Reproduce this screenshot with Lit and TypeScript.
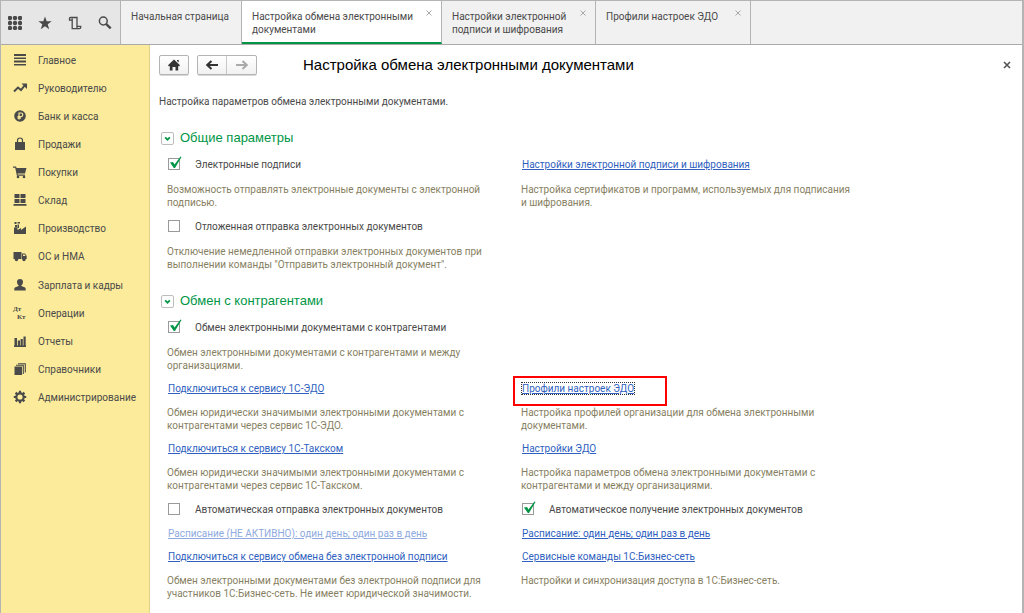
import { LitElement, html, css, svg, nothing, TemplateResult } from "lit";
import { customElement, state } from "lit/decorators.js";
import { classMap } from "lit/directives/class-map.js";

const glyphs: Record<string, TemplateResult> = {
  menu: svg`<path d="M1 1h12v2H1zM1 4.500h12v1.500H1zM1 7.500h12v2H1zM1 11h12v1.500H1z"/>`,
  trend: svg`<path d="M1 10.500L5 6.500L8 9L12 4" fill="none" stroke="currentColor" stroke-width="2"/><path d="M8.500 2.500H14V8z"/>`,
  ruble: svg`<circle cx="7" cy="7" r="5.800"/><path d="M6 10.500V4h2a1.700 1.700 0 0 1 0 3.600H4.500M4.500 9.200H8" fill="none" stroke="#fbeb9a" stroke-width="1.200"/>`,
  bag: svg`<path d="M2 5h10v8H2z"/><path d="M4.500 6.500V3.500a2.500 2.500 0 0 1 5 0v3" fill="none" stroke="currentColor" stroke-width="1.200"/>`,
  cart: svg`<path d="M0 1.500h3l.6 1.500H13.500L12 8.500H4.600l.3 1H12v1.200H3.900L2.200 2.700H0z"/><circle cx="5" cy="12" r="1.300"/><circle cx="11" cy="12" r="1.300"/>`,
  stock: svg`<path d="M1.500 1h5v4h-5zM7.500 1h5v4h-5zM1.500 6h5v4h-5zM7.500 6h5v4h-5zM.5 11h13v1.800H.5z"/>`,
  factory: svg`<path d="M1 13V6.500h3.500V9L8 7v2l5-3.500V13z"/><path d="M1.500 1h2v2h-2zM4.500 1h2.500v1.500H4.500zM2 4h2v2.500H2zM4.500 3.500H6V7H4.500z"/>`,
  truck: svg`<path d="M.5 3h8v7h-8zM9 4.500h3L13.700 7v3H9z"/><path d="M10 5.500h1.600l1 1.500H10z" fill="#fbeb9a"/><circle cx="3.500" cy="10.500" r="1.700"/><circle cx="11" cy="10.500" r="1.700"/>`,
  person: svg`<path d="M7 1a3 3 0 0 1 3 3c0 1.500-.7 2.600-1.600 3.200V8l3.100 1.200c.9.400 1.200.9 1.200 1.800v1.500H1.300V11c0-.9.300-1.400 1.200-1.800L5.600 8v-.8C4.700 6.600 4 5.500 4 4a3 3 0 0 1 3-3z"/>`,
  chart: svg`<path d="M1 11.500h12v1.500H1zM1.500 4h2.500v7.500H1.500zM4.800 6.500h2.200v5H4.800zM7.600 5h2.200v6.500H7.600zM10.500 2.500h2.200v9h-2.200z"/>`,
  books: svg`<path d="M1.500 4.500h7.500V13H1.500z"/><path d="M3 3.300h7.300V12M5 1.700h7.300V10.500" fill="none" stroke="currentColor" stroke-width="1.100"/>`,
  gear: svg`<circle cx="7" cy="7" r="3.700" fill="none" stroke="currentColor" stroke-width="2.200"/><path d="M7 .8V3M7 11v2.200M.8 7H3M11 7h2.200M2.600 2.600l1.500 1.500M9.900 9.900l1.500 1.500M11.400 2.600L9.900 4.100M4.100 9.900l-1.500 1.500" stroke="currentColor" stroke-width="2.200"/>`,
  apps: svg`${[2, 7, 12].map((y) => [2, 7, 12].map((x) => svg`<circle cx=${x} cy=${y} r="2.200"/>`))}`,
  star: svg`<path d="M7 .5l1.700 4.700h5L9.700 8.200l1.500 5L7 10.200l-4.200 3 1.500-5L.3 5.200h5z"/>`,
  scroll: svg`<path d="M3.700 4.200H1.500V2.300Q1.500 1.500 2.500 1.500H9V10.300H12.700V11.500Q12.700 12.600 11.500 12.600H4.200V2.500M9 10.500V12.300" fill="none" stroke="currentColor" stroke-width="1.300"/>`,
  search: svg`<circle cx="5.300" cy="5" r="3.900" fill="none" stroke="currentColor" stroke-width="1.500"/><path d="M8 7.800L12.700 12.300" stroke="currentColor" stroke-width="2.400"/>`,
  home: svg`<path d="M7 1.500L13 7.300l-1 1.200-.8-.7V12.500H8.500V9h-3v3.500H2.800V7.800L2 8.500 1 7.300zM10 2h1.700v2.500L10 3z"/>`,
  back: svg`<path d="M2 7h11M6.500 3L2.200 7l4.300 4" fill="none" stroke="currentColor" stroke-width="2"/>`,
  forward: svg`<path d="M1 7h11M7.500 3l4.300 4-4.300 4" fill="none" stroke="currentColor" stroke-width="2"/>`,
  cross: svg`<path d="M4 4l6 6M10 4l-6 6" stroke="currentColor" stroke-width="1.600"/>`,
  thin: svg`<path d="M4.500 4.500l5 5M9.500 4.500l-5 5" stroke="currentColor" stroke-width="1"/>`,
  down: svg`<path d="M4 5.500L7 8.500l3-3" fill="none" stroke="currentColor" stroke-width="2.200"/>`,
};

const icon = (name: string) =>
  html`<svg class="icon" viewBox="0 0 14 14" fill="currentColor" aria-hidden="true">${glyphs[name]}</svg>`;

const sections: [string, string][] = [
  ["menu", "Главное"],
  ["trend", "Руководителю"],
  ["ruble", "Банк и касса"],
  ["bag", "Продажи"],
  ["cart", "Покупки"],
  ["stock", "Склад"],
  ["factory", "Производство"],
  ["truck", "ОС и НМА"],
  ["person", "Зарплата и кадры"],
  ["", "Операции"],
  ["chart", "Отчеты"],
  ["books", "Справочники"],
  ["gear", "Администрирование"],
];

interface Cell {
  kind: "check" | "note" | "link";
  text: string;
  id?: string;
  muted?: boolean;
  marked?: boolean;
}
type Row = [Cell | null, Cell | null];

const check = (id: string, text: string): Cell => ({ kind: "check", id, text });
const note = (text: string): Cell => ({ kind: "note", text });
const link = (text: string, extra: Partial<Cell> = {}): Cell => ({ kind: "link", text, ...extra });

const general: Row[] = [
  [check("sign", "Электронные подписи"), link("Настройки электронной подписи и шифрования")],
  [
    note("Возможность отправлять электронные документы с электронной подписью."),
    note("Настройка сертификатов и программ, используемых для подписания и шифрования."),
  ],
  [check("delayed", "Отложенная отправка электронных документов"), null],
  [
    note('Отключение немедленной отправки электронных документов при выполнении команды "Отправить электронный документ".'),
    null,
  ],
];

const partners: Row[] = [
  [check("exchange", "Обмен электронными документами с контрагентами"), null],
  [note("Обмен электронными документами с контрагентами и между организациями."), null],
  [link("Подключиться к сервису 1С-ЭДО"), link("Профили настроек ЭДО", { marked: true })],
  [
    note("Обмен юридически значимыми электронными документами с контрагентами через сервис 1С-ЭДО."),
    note("Настройка профилей организации для обмена электронными документами."),
  ],
  [link("Подключиться к сервису 1С-Такском"), link("Настройки ЭДО")],
  [
    note("Обмен юридически значимыми электронными документами с контрагентами через сервис 1С-Такском."),
    note("Настройка параметров обмена электронными документами с контрагентами и между организациями."),
  ],
  [
    check("autosend", "Автоматическая отправка электронных документов"),
    check("autoget", "Автоматическое получение электронных документов"),
  ],
  [
    link("Расписание (НЕ АКТИВНО): один день; один раз в день", { muted: true }),
    link("Расписание: один день; один раз в день"),
  ],
  [
    link("Подключиться к сервису обмена без электронной подписи"),
    link("Сервисные команды 1С:Бизнес-сеть"),
  ],
  [
    note("Обмен электронными документами без электронной подписи для участников 1С:Бизнес-сеть. Не имеет юридической значимости."),
    note("Настройки и синхронизация доступа в 1С:Бизнес-сеть."),
  ],
];

@customElement("app-root")
export class AppRoot extends LitElement {
  @state() private checked = new Set(["sign", "exchange", "autoget"]);

  static styles = css`
    :host {
      display: flex;
      flex-direction: column;
      box-sizing: border-box;
      min-height: 100vh;
      border: 1px solid #b4b4b4;
      border-width: 1px 2px 0 1px;
      background: #fff;
      color: #4a4a4a;
      font: 10px/13px Roboto, "Liberation Sans", Arial, sans-serif;
    }
    * { box-sizing: border-box; }
    button { font: inherit; color: inherit; margin: 0; padding: 0; border: 0; background: none; }
    .icon { display: block; width: 14px; height: 14px; flex: none; }

    .top { display: flex; min-height: 44px; background: #f1f1f1; border-bottom: 1px solid #a9a9a9; }
    .tools { display: flex; align-items: center; gap: 16px; padding: 0 8px 0 7px; background: #e6e6e6; border-right: 1px solid #b4b4b4; }
    .tab { display: flex; align-items: flex-start; border-right: 1px solid #b4b4b4; padding: 0 5px 0 10px; }
    .tab-name { flex: 1; padding: 9px 0 5px; text-align: left; }
    .tab-close { margin-top: 5px; color: #a8a8a8; }
    .start { flex: 0 0 121px; }
    .wide { flex: 0 0 200px; }
    .middle { flex: 0 0 154px; }
    .last { flex: 0 0 155px; }
    .active { background: #fff; border-bottom: 2px solid #009646; }

    .body { display: flex; flex: 1; }
    .side { flex: 0 0 149px; padding-top: 1px; background: #fbeb9a; border-right: 1px solid #dfd08a; display: flex; flex-direction: column; }
    .side-item { display: flex; align-items: center; gap: 11px; height: 28px; padding-left: 12px; color: #4a4a4a; text-decoration: none; white-space: nowrap; }
    .side-item:nth-child(8n) { margin-bottom: 1px; }
    .dtkt { display: flex; flex-direction: column; width: 14px; font: bold 7px/8px "Liberation Serif", serif; }
    .kt { padding-left: 4px; }

    .main { flex: 1; min-width: 0; padding: 10px 8px 0 9px; }
    .head { display: flex; align-items: center; height: 20px; }
    .box { display: flex; border: 1px solid #b4b4b4; border-radius: 2px; background: linear-gradient(#fff, #f1f1f1); box-shadow: 0 1px 0 #d8d8d8; color: #333; }
    .box button { display: grid; place-items: center; width: 28px; height: 18px; }
    .arrows { margin-left: 8px; }
    .box .next { width: 30px; border-left: 1px solid #c8c8c8; color: #aaa; }
    h1 { flex: 1; margin: 0 0 0 46px; font: normal 15px/20px "Liberation Sans", Arial, sans-serif; color: #000; }
    .close { color: #555; }
    .lead { margin: 20px 0 0; }
    h2 { display: flex; align-items: center; gap: 6px; margin: 0; padding-left: 2px; height: 20px; font: normal 13px/20px "Liberation Sans", Arial, sans-serif; color: #009646; }
    .fold { display: grid; place-items: center; width: 13px; height: 13px; border: 1px solid #bdbdbd; border-radius: 2px; }
    .fold .icon { width: 11px; height: 11px; }
    .group { margin-top: 20px; }
    .rows { display: grid; gap: 10px; padding: 9px 0 0 8px; }
    .row { display: grid; grid-template-columns: 354px minmax(0, 1fr); }
    .second { grid-column: 2; }
    .with-check { align-items: center; min-height: 16px; margin-top: -1px; }
    .with-note { margin-top: 1px; }
    .note { margin: 0; max-width: 336px; color: #877f62; }
    .check { display: flex; align-items: center; }
    .tick { position: relative; width: 13px; height: 12px; margin: 0 14px 0 1px; }
    .tick input { display: block; appearance: none; width: 12px; height: 12px; margin: 0; border: 1px solid #9a9a9a; background: #fff; }
    .tick svg { position: absolute; left: 1px; top: -2px; width: 13px; height: 13px; pointer-events: none; }
    .link { color: #2f5fc0; text-decoration: underline; margin-left: 1px; }
    .muted { color: #8eaae0; }
    .marked { position: relative; }
    .marked .link { outline: 1px dotted #333; }
    .marked::after { content: ""; box-sizing: border-box; position: absolute; left: -8px; top: -6px; width: 154px; height: 30px; border: 2px solid #ff0000; pointer-events: none; }
  `;

  private toggle(id: string) {
    const next = new Set(this.checked);
    next.has(id) ? next.delete(id) : next.add(id);
    this.checked = next;
  }

  private cell(c: Cell | null, second: boolean) {
    if (!c) return nothing;
    const place = { second };
    if (c.kind === "note") return html`<p class=${classMap({ note: true, ...place })}>${c.text}</p>`;
    if (c.kind === "link")
      return html`<div class=${classMap({ marked: !!c.marked, ...place })}>
        <a href="#" class=${classMap({ link: true, muted: !!c.muted })}>${c.text}</a>
      </div>`;
    const on = this.checked.has(c.id!);
    return html`<label class=${classMap({ check: true, ...place })}>
      <span class="tick">
        <input type="checkbox" .checked=${on} @change=${() => this.toggle(c.id!)} />
        ${on
          ? html`<svg viewBox="0 0 13 13" aria-hidden="true"><path d="M1 6.500l3-.5 1.500 2.500L11.500.5 12.500 1 6 12H4.800z" fill="#009646" /></svg>`
          : nothing}
      </span>
      ${c.text}
    </label>`;
  }

  private group(title: string, rows: Row[]) {
    return html`<section class="group">
      <h2><button class="fold" aria-label="Свернуть">${icon("down")}</button>${title}</h2>
      <div class="rows">
        ${rows.map(
          (r) => html`<div class=${classMap({ row: true, "with-check": r[0]?.kind === "check", "with-note": r[0]?.kind === "note" })}>
            ${this.cell(r[0], false)}${this.cell(r[1], true)}
          </div>`
        )}
      </div>
    </section>`;
  }

  private tab(text: string, size: string, closable = true, active = false) {
    return html`<div class=${classMap({ tab: true, [size]: true, active })}>
      <button class="tab-name">${text}</button>
      ${closable ? html`<button class="tab-close" aria-label="Закрыть">${icon("thin")}</button>` : nothing}
    </div>`;
  }

  render() {
    return html`
      <header class="top">
        <div class="tools">
          <button aria-label="Меню">${icon("apps")}</button>
          <button aria-label="Избранное">${icon("star")}</button>
          <button aria-label="История">${icon("scroll")}</button>
          <button aria-label="Поиск">${icon("search")}</button>
        </div>
        ${this.tab("Начальная страница", "start", false)}
        ${this.tab("Настройка обмена электронными документами", "wide", true, true)}
        ${this.tab("Настройки электронной подписи и шифрования", "middle")}
        ${this.tab("Профили настроек ЭДО", "last")}
      </header>
      <div class="body">
        <nav class="side">
          ${sections.map(
            ([name, text]) => html`<a class="side-item" href="#">
              ${name ? icon(name) : html`<span class="dtkt" aria-hidden="true"><span>Дт</span><span class="kt">Кт</span></span>`}${text}
            </a>`
          )}
        </nav>
        <main class="main">
          <div class="head">
            <div class="box"><button aria-label="Домой">${icon("home")}</button></div>
            <div class="box arrows">
              <button aria-label="Назад">${icon("back")}</button>
              <button class="next" aria-label="Вперед">${icon("forward")}</button>
            </div>
            <h1>Настройка обмена электронными документами</h1>
            <button class="close" aria-label="Закрыть">${icon("cross")}</button>
          </div>
          <p class="lead">Настройка параметров обмена электронными документами.</p>
          ${this.group("Общие параметры", general)} ${this.group("Обмен с контрагентами", partners)}
        </main>
      </div>
    `;
  }
}
